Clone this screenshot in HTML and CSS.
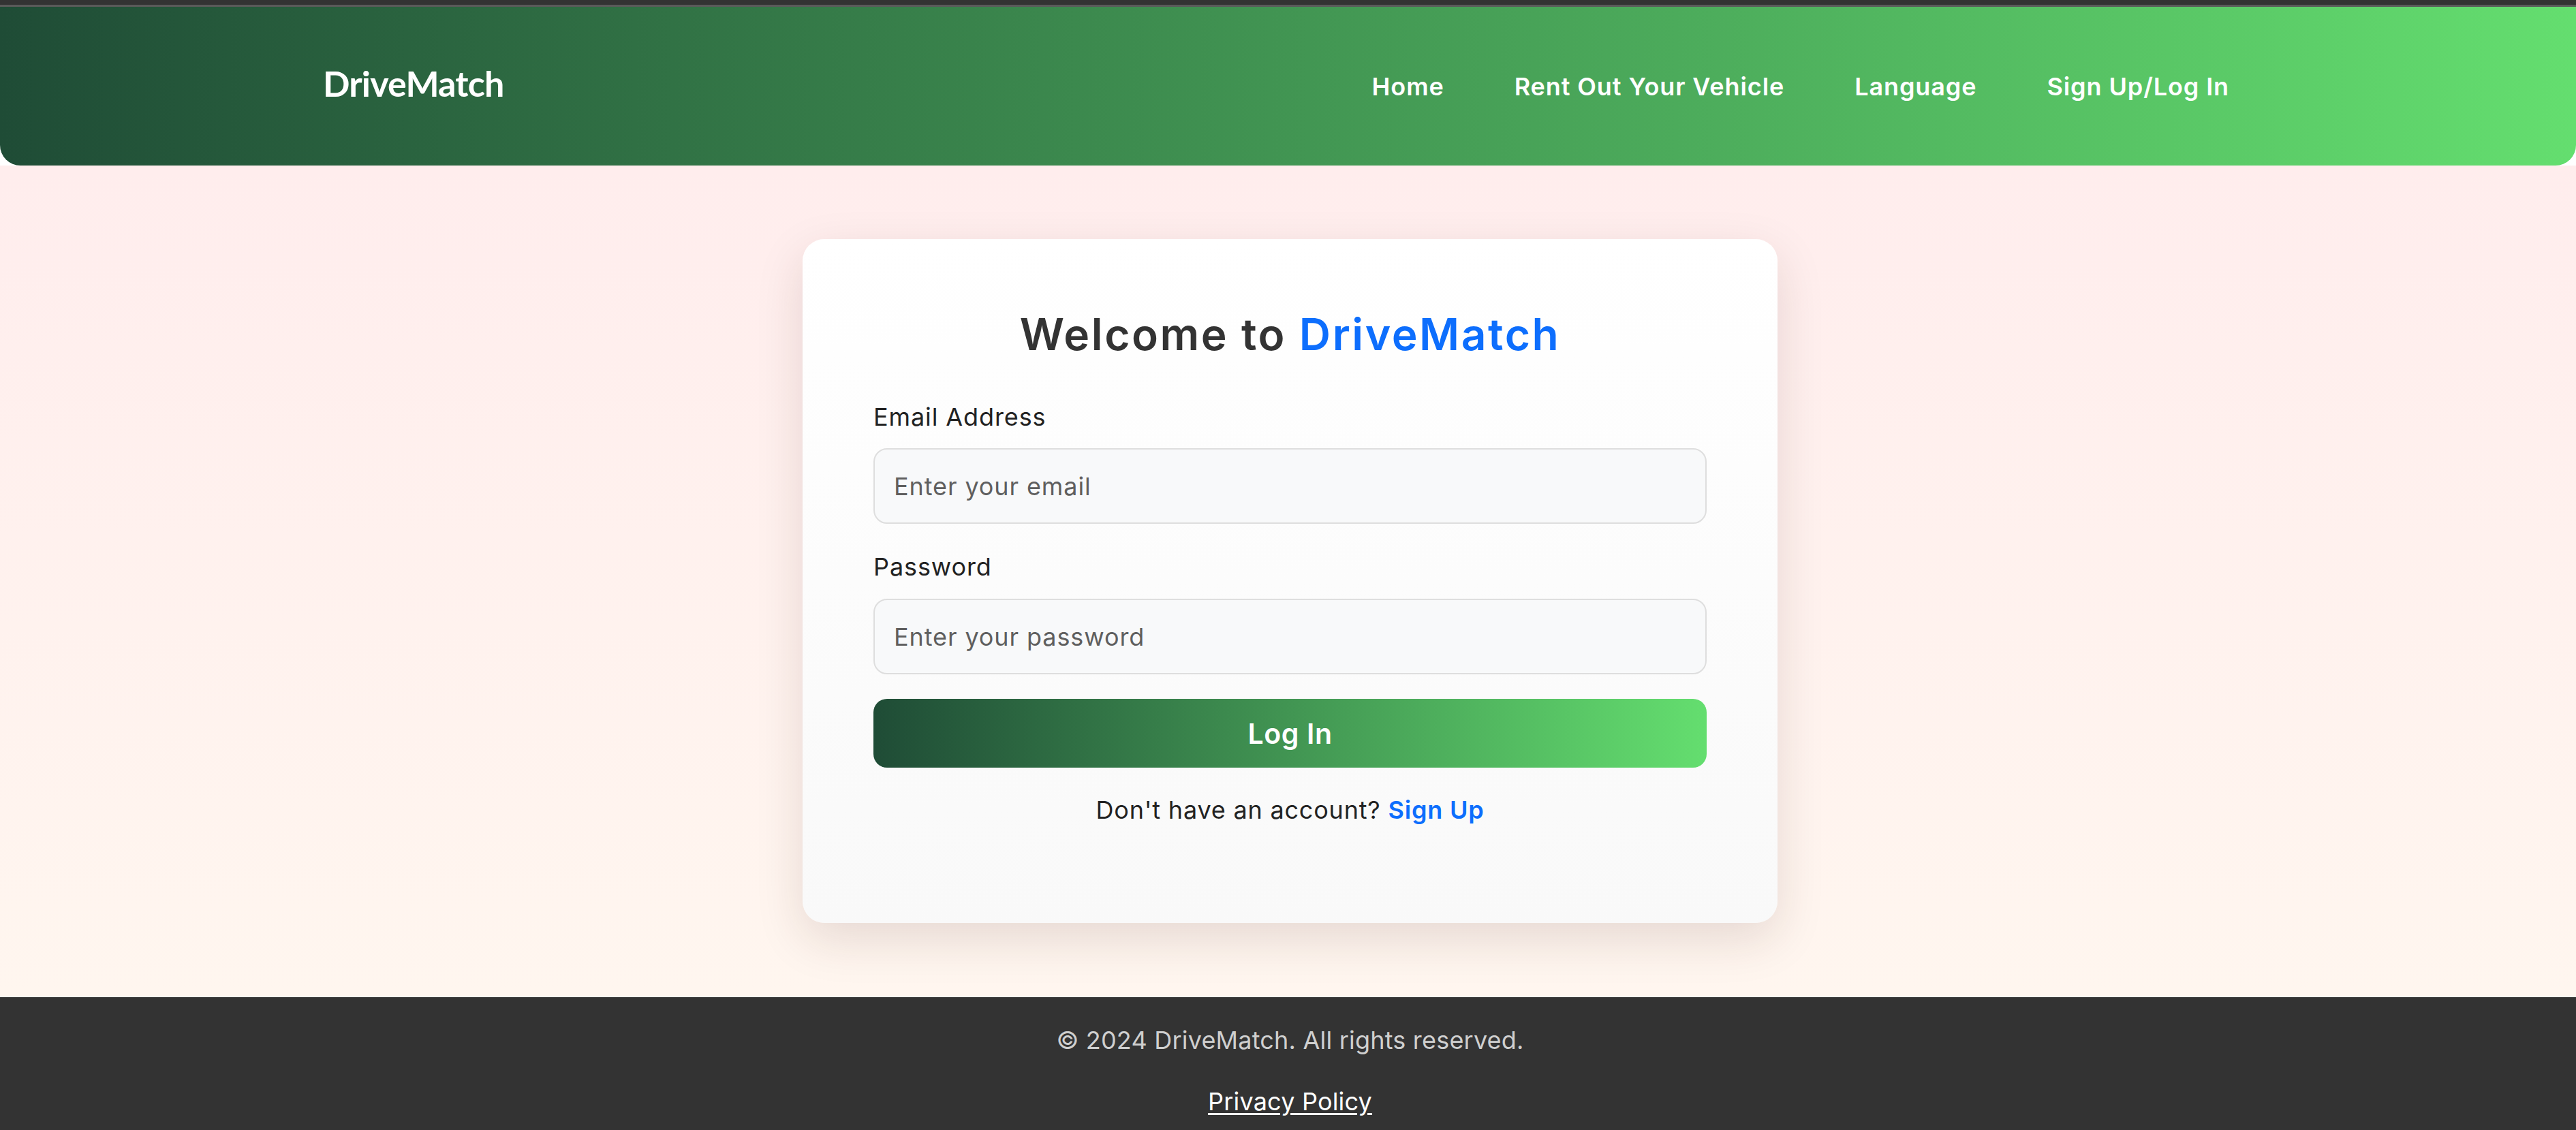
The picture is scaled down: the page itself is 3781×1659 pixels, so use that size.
FILE: index.html
```html
<!DOCTYPE html>
<html lang="en">
<head>
<meta charset="utf-8">
<title>DriveMatch - Log In</title>
<link rel="stylesheet" href="styles.css">
</head>
<body>
<div class="topbar"></div>
<header class="site-header">
  <a class="logo" href="#">DriveMatch</a>
  <nav class="nav">
    <a href="#">Home</a>
    <a href="#">Rent Out Your Vehicle</a>
    <a href="#">Language</a>
    <a href="#">Sign Up/Log In</a>
  </nav>
</header>
<main class="main">
  <section class="card">
    <h1 class="title">Welcome to <span class="brand">DriveMatch</span></h1>
    <form class="form">
      <div class="group">
        <label class="label" for="email">Email Address</label>
        <input class="input" id="email" type="email" placeholder="Enter your email">
      </div>
      <div class="group">
        <label class="label" for="password">Password</label>
        <input class="input" id="password" type="password" placeholder="Enter your password">
      </div>
      <button class="btn" type="button">Log In</button>
    </form>
    <p class="switch">Don't have an account? <a href="#">Sign Up</a></p>
  </section>
</main>
<footer class="footer">
  <p class="copy">© 2024 DriveMatch. All rights reserved.</p>
  <p class="links"><a href="#">Privacy Policy</a></p>
</footer>
</body>
</html>
```

FILE: styles.css
```css
* { box-sizing: border-box; }

html, body {
  margin: 0;
  padding: 0;
}

body {
  font-family: "Inter", "Noto Sans", sans-serif;
  color: #222;
  letter-spacing: 0.6px;
  overflow: hidden;
}

.topbar {
  height: 10px;
  background: #333;
  border-bottom: 3px solid #5a5a5a;
}

.site-header {
  height: 233px;
  display: flex;
  align-items: center;
  justify-content: space-between;
  padding: 0 509px 0 474px;
  background: linear-gradient(90deg, #1f4c36 0%, #64de6f 100%);
  border-radius: 0 0 30px 30px;
}

.logo {
  font-family: "Lato", "Noto Sans", sans-serif;
  font-weight: 700;
  font-size: 52px;
  letter-spacing: -0.8px;
  color: #fff;
  text-decoration: none;
  margin-bottom: 10px;
}

.nav {
  display: flex;
  gap: 103px;
}

.nav a {
  color: #fff;
  text-decoration: none;
  font-size: 36px;
  font-weight: 600;
  letter-spacing: 0.9px;
}

.main {
  padding: 108px 0 109px 6px;
  background: linear-gradient(180deg, #ffeded 0%, #fff6ef 100%);
  display: flex;
  justify-content: center;
}

.card {
  width: 1431px;
  padding: 104px;
  border-radius: 32px;
  background: linear-gradient(180deg, #ffffff 0%, #f9f9f9 100%);
  box-shadow: 0 24px 70px rgba(60, 30, 20, 0.13);
}

.title {
  margin: 0 0 58px;
  text-align: center;
  font-size: 64px;
  line-height: 72px;
  font-weight: 600;
  letter-spacing: 2.6px;
  color: #333;
}

.brand { color: #0d6efd; }

.form { margin: 0; }

.group { margin-bottom: 36px; }

.label {
  display: block;
  margin-bottom: 19px;
  font-size: 36px;
  line-height: 54px;
  color: #222;
  letter-spacing: 0.9px;
}

.group + .group .label { margin-bottom: 20px; }

.input {
  display: block;
  width: 100%;
  height: 111px;
  padding: 0 28px;
  border: 2px solid #dedede;
  border-radius: 20px;
  background: #f8f9fa;
  font-family: inherit;
  font-size: 36px;
  letter-spacing: 0.9px;
  color: #333;
  outline: none;
}

.input::placeholder { color: #5f5f5f; }

.btn {
  display: block;
  width: 100%;
  height: 101px;
  border: 0;
  border-radius: 20px;
  background: linear-gradient(90deg, #1f4c36 0%, #64de6f 100%);
  color: #fff;
  font-family: inherit;
  font-size: 41px;
  font-weight: 600;
  letter-spacing: 0.6px;
  cursor: pointer;
}

.switch {
  margin: 35px 0;
  text-align: center;
  font-size: 36px;
  line-height: 54px;
  letter-spacing: 0.8px;
  color: #222;
}

.switch a {
  color: #0d6efd;
  font-weight: 600;
  text-decoration: none;
}

.footer {
  height: 195px;
  padding: 36px 0 0 6px;
  background: #333;
  text-align: center;
  font-size: 36px;
  line-height: 54px;
  letter-spacing: 0.2px;
}

.footer p { margin: 0; }

.copy { color: #cfcfcf; }

.links { margin-top: 36px !important; }

.links a {
  color: #fff;
  text-decoration: underline;
  text-underline-offset: 4px;
}
```
